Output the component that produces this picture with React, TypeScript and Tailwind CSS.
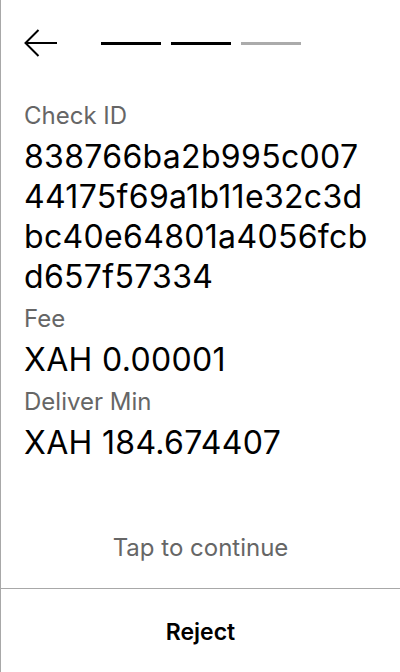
const checkId = ["838766ba2b995c007", "44175f69a1b11e32c3d", "bc40e64801a4056fcb", "d657f57334"];

const rows = [
  { label: "Fee", value: "XAH 0.00001" },
  { label: "Deliver Min", value: "XAH 184.674407" },
];

const BackArrow = () => (
  <svg width="33" height="28" viewBox="0 0 33 28" fill="none" stroke="#000" strokeWidth="2">
    <path d="M1.5 14H33" />
    <path d="M14.5 1L1.5 14L14.5 27" />
  </svg>
);

export default function App() {
  return (
    <div className="flex h-[672px] w-[400px] flex-col border-l border-[#a8a8a8] bg-white font-['Inter',sans-serif] text-black">
      <div className="flex h-[86px] items-center pl-[23px]">
        <BackArrow />
        <div className="ml-[44px] flex gap-[10px]">
          <div className="h-[3px] w-[60px] bg-black" />
          <div className="h-[3px] w-[60px] bg-black" />
          <div className="h-[3px] w-[60px] bg-[#ababab]" />
        </div>
      </div>

      <div className="px-[23px] pt-[8px]">
        <p className="text-[24px] leading-[43px] text-[#666]">Check ID</p>
        <div className="text-[32px] leading-[40px] tracking-[0.01em]">
          {checkId.map((line) => (
            <div key={line}>{line}</div>
          ))}
        </div>
        {rows.map((r) => (
          <div key={r.label}>
            <p className="text-[24px] leading-[43px] text-[#666]">{r.label}</p>
            <p className="text-[32px] leading-[40px] tracking-[0.01em]">{r.value}</p>
          </div>
        ))}
      </div>

      <p className="mt-auto pb-5 text-center text-[24px] leading-[40px] text-[#666]">Tap to continue</p>
      <div className="border-t border-[#a8a8a8]">
        <button className="flex h-[83px] w-full items-center justify-center pt-[3px] text-[23px] font-semibold">
          Reject
        </button>
      </div>
    </div>
  );
}
